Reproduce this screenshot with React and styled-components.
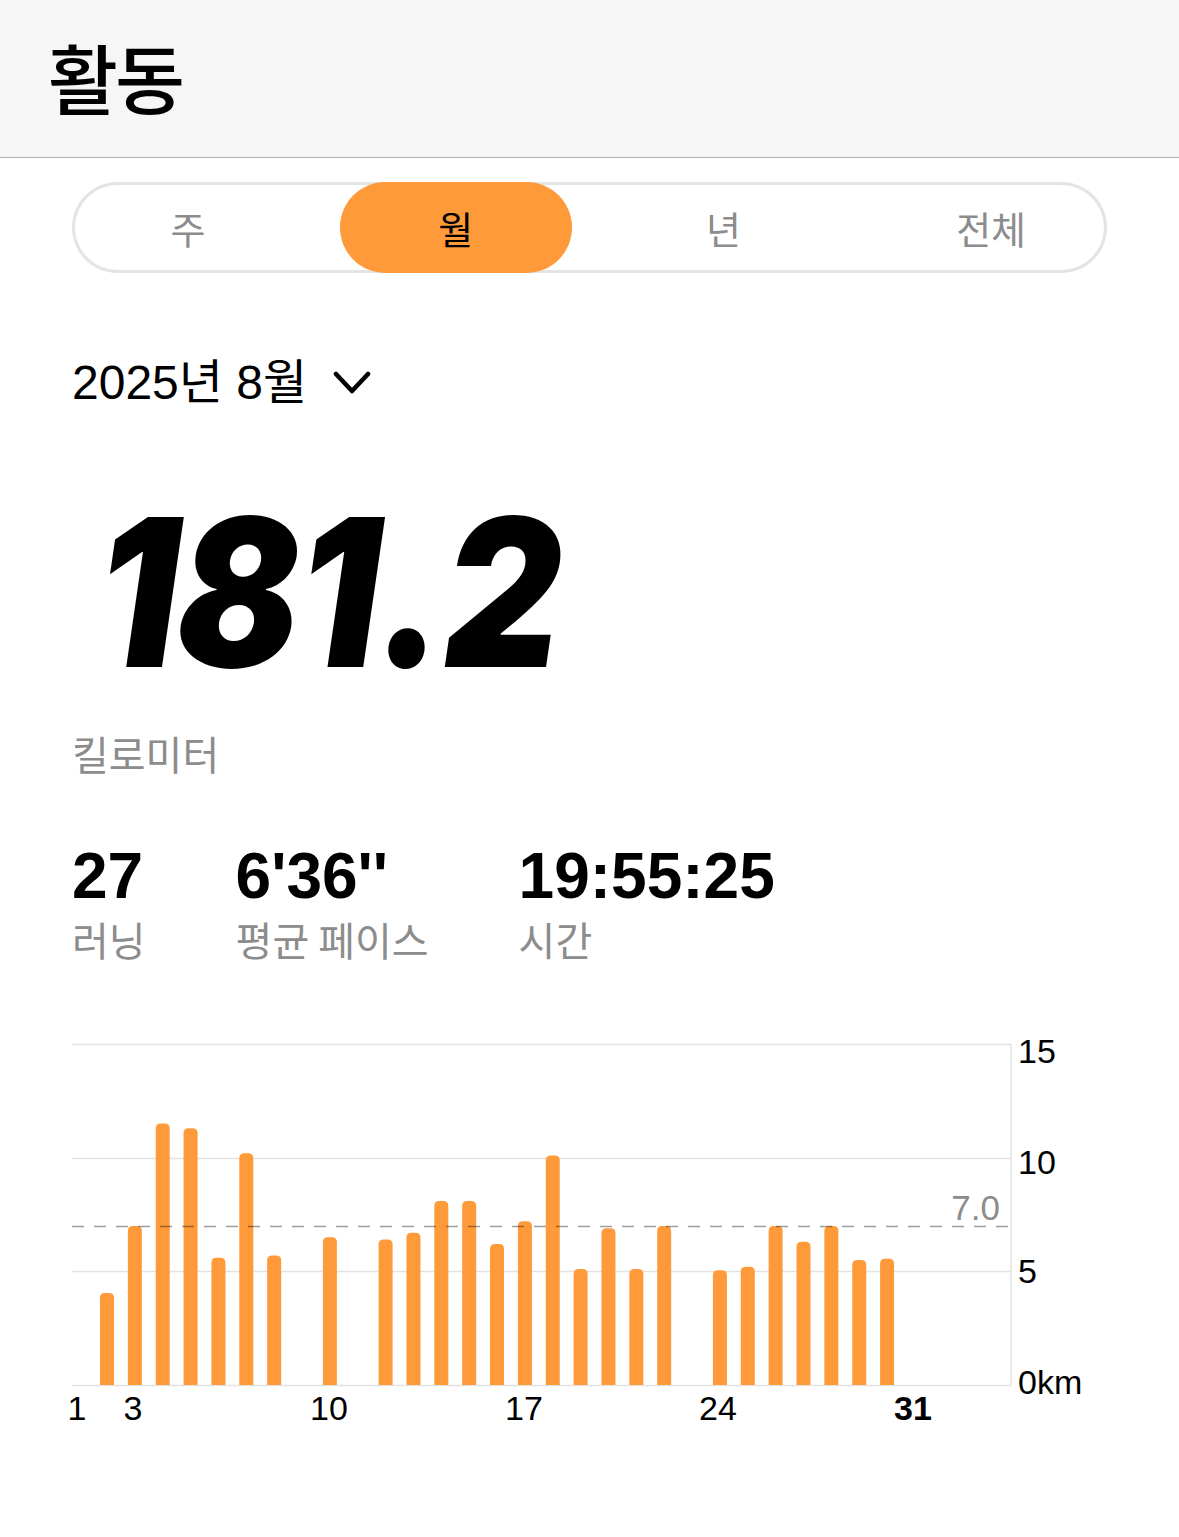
import React from 'react';
import styled, { createGlobalStyle } from 'styled-components';

const ORANGE = '#ff9a3a';
const GRAY = '#8c8c8c';

const GlobalStyle = createGlobalStyle`
  body {
    margin: 0;
    background: #fff;
    font-family: "Liberation Sans", "Noto Sans CJK KR", sans-serif;
    color: #000;
  }
`;

const Header = styled.header`
  height: 158px;
  border-bottom: 1px solid #b0b0b0;
  background: #f6f6f6;
  display: flex;
  align-items: center;
  padding: 0 0 6px 48px;
  box-sizing: border-box;
`;

const Title = styled.h1`
  margin: 0;
  font-family: "Noto Sans CJK KR", sans-serif;
  font-weight: 500;
  font-size: 76px;
  letter-spacing: -3px;
`;

const Main = styled.main`
  padding: 0 72px;
`;

const Tabs = styled.div`
  margin-top: 24px;
  height: 91px;
  border-radius: 46px;
  box-shadow: inset 0 0 0 3px #e4e4e4;
  display: grid;
  grid-template-columns: repeat(4, 1fr);
  column-gap: 36px;
`;

const Tab = styled.div`
  display: flex;
  align-items: center;
  justify-content: center;
  border-radius: 46px;
  font-family: "Noto Sans CJK KR", sans-serif;
  font-size: 38px;
  color: ${p => (p.$active ? '#000' : GRAY)};
  background: ${p => (p.$active ? ORANGE : 'transparent')};
`;

const DateRow = styled.div`
  margin-top: 82px;
  display: flex;
  align-items: center;
  gap: 26px;
  height: 56px;
  font-size: 48px;
  line-height: 56px;
`;

const BigNumber = styled.div`
  margin-top: 78px;
  height: 206px;
  font-family: Inter, sans-serif;
  font-weight: 900;
  font-style: italic;
  font-size: 206px;
  line-height: 206px;
  letter-spacing: -2px;
  transform: scaleX(0.88);
  transform-origin: left center;
  padding-left: 28px;
`;

const Unit = styled.div`
  margin-top: 30px;
  font-family: "Noto Sans CJK KR", sans-serif;
  font-size: 40px;
  line-height: 56px;
  color: ${GRAY};
`;

const StatRow = styled.div`
  margin-top: 60px;
  display: flex;
  gap: 90px;
`;

const Stat = styled.div`
  display: flex;
  flex-direction: column;
`;

const StatValue = styled.div`
  font-weight: 700;
  font-size: 64px;
  line-height: 70px;
`;

const StatLabel = styled.div`
  font-family: "Noto Sans CJK KR", sans-serif;
  font-size: 40px;
  line-height: 56px;
  color: ${GRAY};
`;

const Chart = styled.svg`
  display: block;
  margin-top: 62px;
  overflow: visible;
`;

const runs = {
  2: 4.05, 3: 7.0, 4: 11.5, 5: 11.3, 6: 5.6, 7: 10.2, 8: 5.7, 10: 6.5,
  12: 6.4, 13: 6.7, 14: 8.1, 15: 8.1, 16: 6.2, 17: 7.2, 18: 10.1, 19: 5.1,
  20: 6.9, 21: 5.1, 22: 7.0, 24: 5.05, 25: 5.2, 26: 7.0, 27: 6.3, 28: 7.0,
  29: 5.5, 30: 5.55,
};

const PLOT_W = 939;
const BASE = 356;
const KM = 22.73;
const STEP = 27.86;
const BAR_W = 14;
const dayX = d => 35 + (d - 2) * STEP;

function barPath(cx, top) {
  const x = cx - BAR_W / 2;
  const r = 5;
  return `M${x},${BASE} V${top + r} Q${x},${top} ${x + r},${top} H${x + BAR_W - r} Q${x + BAR_W},${top} ${x + BAR_W},${top + r} V${BASE} Z`;
}

const axisText = {
  fontFamily: '"Liberation Sans", sans-serif',
  fontSize: 34,
};

function DistanceChart() {
  const grid = [15, 129, 242, BASE];
  const yLabels = [
    ['15', 34],
    ['10', 145],
    ['5', 254],
    ['0km', 365],
  ];
  const xLabels = [
    ['1', 5],
    ['3', 61],
    ['10', 257],
    ['17', 452],
    ['24', 646],
    ['31', 841, true],
  ];
  return (
    <Chart width="1035" height="400" viewBox="0 0 1035 400">
      {grid.map(y => (
        <line key={y} x1="0" x2={PLOT_W} y1={y + 0.5} y2={y + 0.5} stroke="#e2e2e2" strokeWidth="1.5" />
      ))}
      <line x1={PLOT_W} x2={PLOT_W} y1="15" y2={BASE} stroke="#e2e2e2" strokeWidth="1.5" />
      {Object.entries(runs).map(([d, v]) => (
        <path key={d} d={barPath(dayX(Number(d)), BASE - v * KM)} fill={ORANGE} />
      ))}
      <line
        x1="0"
        x2={PLOT_W}
        y1="197.5"
        y2="197.5"
        stroke="rgba(0,0,0,0.38)"
        strokeWidth="1.5"
        strokeDasharray="12 10"
      />
      <text x="928" y="191" textAnchor="end" fill={GRAY} style={{ ...axisText, fontSize: 35 }}>
        7.0
      </text>
      {yLabels.map(([t, y]) => (
        <text key={t} x="946" y={y} fill="#000" style={axisText}>
          {t}
        </text>
      ))}
      {xLabels.map(([t, x, bold]) => (
        <text
          key={t}
          x={x}
          y="391"
          textAnchor="middle"
          fill="#000"
          style={{ ...axisText, fontWeight: bold ? 700 : 400 }}
        >
          {t}
        </text>
      ))}
    </Chart>
  );
}

function Chevron() {
  return (
    <svg width="38" height="24" viewBox="0 0 38 24">
      <path d="M3 3 L19 20 L35 3" fill="none" stroke="#000" strokeWidth="4.5" strokeLinecap="round" strokeLinejoin="round" />
    </svg>
  );
}

export default function App() {
  const tabs = ['주', '월', '년', '전체'];
  return (
    <>
      <GlobalStyle />
      <Header>
        <Title>활동</Title>
      </Header>
      <Main>
        <Tabs>
          {tabs.map(t => (
            <Tab key={t} $active={t === '월'}>
              {t}
            </Tab>
          ))}
        </Tabs>
        <DateRow>
          <span>2025년 8월</span>
          <Chevron />
        </DateRow>
        <BigNumber>181.2</BigNumber>
        <Unit>킬로미터</Unit>
        <StatRow>
          <Stat>
            <StatValue>27</StatValue>
            <StatLabel>러닝</StatLabel>
          </Stat>
          <Stat>
            <StatValue>6'36''</StatValue>
            <StatLabel>평균 페이스</StatLabel>
          </Stat>
          <Stat>
            <StatValue>19:55:25</StatValue>
            <StatLabel>시간</StatLabel>
          </Stat>
        </StatRow>
        <DistanceChart />
      </Main>
    </>
  );
}
